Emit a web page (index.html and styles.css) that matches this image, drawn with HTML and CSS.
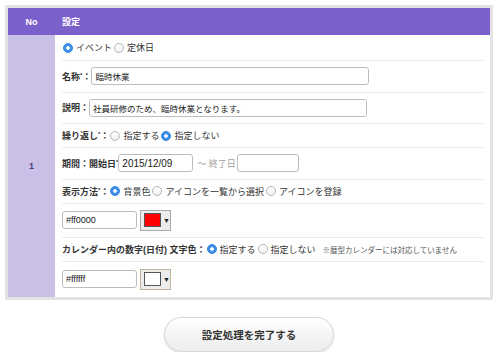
FILE: index.html
```html
<!DOCTYPE html>
<html lang="ja">
<head>
    <meta charset="UTF-8">
    <title>設定</title>
    <link rel="stylesheet" href="styles.css">
</head>
<body>
    <div class="frame">
        <table class="settings">
            <tr>
                <th class="col-no">No</th>
                <th class="col-set">設定</th>
            </tr>
            <tr>
                <td class="num">1</td>
                <td class="cell">
                    <div class="row row-first">
                        <label><input type="radio" name="kind" checked>イベント</label>
                        <label><input type="radio" name="kind">定休日</label>
                    </div>
                    <div class="row row-input">
                        <span class="lbl">名称<sup>*</sup>：</span>
                        <input type="text" class="txt wide" value="臨時休業">
                    </div>
                    <div class="row row-input">
                        <span class="lbl">説明：</span>
                        <input type="text" class="txt wide" value="社員研修のため、臨時休業となります。">
                    </div>
                    <div class="row">
                        <span class="lbl">繰り返し<sup>*</sup>：</span>
                        <label><input type="radio" name="rep">指定する</label>
                        <label><input type="radio" name="rep" checked>指定しない</label>
                    </div>
                    <div class="row row-input">
                        <span class="lbl">期間：開始日<sup>*</sup></span>
                        <input type="text" class="txt date" value="2015/12/09">
                        <span class="muted">〜 終了日</span>
                        <input type="text" class="txt date-end" value="">
                    </div>
                    <div class="row">
                        <span class="lbl">表示方法<sup>*</sup>：</span>
                        <label><input type="radio" name="disp" checked>背景色</label>
                        <label><input type="radio" name="disp">アイコンを一覧から選択</label>
                        <label><input type="radio" name="disp">アイコンを登録</label>
                    </div>
                    <div class="row row-color">
                        <input type="text" class="txt hex" value="#ff0000">
                        <div class="picker">
                            <span class="swatch red"></span>
                            <span class="arrow">▼</span>
                        </div>
                    </div>
                    <div class="row">
                        <span class="lbl">カレンダー内の数字(日付) 文字色：</span>
                        <label><input type="radio" name="fg" checked>指定する</label>
                        <label><input type="radio" name="fg">指定しない</label>
                        <span class="note">※暦型カレンダーには対応していません</span>
                    </div>
                    <div class="row row-color last">
                        <input type="text" class="txt hex" value="#ffffff">
                        <div class="picker tan">
                            <span class="swatch"></span>
                            <span class="arrow">▼</span>
                        </div>
                    </div>
                </td>
            </tr>
        </table>
    </div>

    <div class="actions">
        <button class="submit">設定処理を完了する</button>
    </div>
</body>
</html>
```

FILE: styles.css
```css
body {
    margin: 5px 7px 0 5px;
    font-family: "Liberation Sans", "Noto Sans CJK JP", sans-serif;
    font-size: 9px;
    color: #333;
    background: #fff;
}
.frame {
    border: 3px solid #e3e3e3;
}
.settings {
    width: 100%;
    border-collapse: collapse;
}
.settings th {
    background: #7b5fcb;
    color: #fff;
    font-weight: bold;
    height: 27px;
    padding: 0;
}
.col-no {
    width: 47px;
    text-align: center;
}
.col-set {
    text-align: left;
    padding-left: 7px !important;
}
.num {
    background: #c9bfe7;
    color: #4a3d80;
    font-weight: bold;
    text-align: center;
    vertical-align: middle;
    padding: 0;
}
.cell {
    padding: 0 6px 0 7px;
}
.row {
    display: flex;
    align-items: center;
    box-sizing: border-box;
    height: 24px;
    border-bottom: 1px solid #ececec;
    white-space: nowrap;
}
.row-first {
    height: 26px;
}
.row-input {
    height: 31.5px;
}
.row-color {
    height: 34px;
}
.row.last {
    height: 35px;
    border-bottom: none;
}
.lbl {
    font-weight: bold;
    color: #333;
}
.lbl sup {
    font-size: 6px;
    vertical-align: 3px;
    line-height: 0;
}
label {
    display: inline-flex;
    align-items: center;
    margin-right: 1px;
}
input[type="radio"] {
    appearance: none;
    -webkit-appearance: none;
    width: 10px;
    height: 10px;
    margin: 0 3px 0 1px;
    border: 1px solid #b5b5b5;
    border-radius: 50%;
    background: linear-gradient(#fff, #f1f1f1);
    box-sizing: border-box;
}
input[type="radio"]:checked {
    border-color: #3a86e0;
    background: radial-gradient(circle, #fff 0 1.5px, #3d8fea 2px);
}
.txt {
    box-sizing: border-box;
    height: 18px;
    border: 1px solid #bdbdbd;
    border-radius: 3px;
    padding: 0 3px;
    font-family: "Liberation Sans", "Noto Sans CJK JP", sans-serif;
    font-size: 8.5px;
    color: #222;
    background: #fff;
}
.wide {
    width: 278px;
}
.date {
    width: 75px;
    font-size: 10px;
}
.date-end {
    width: 62px;
}
.muted {
    color: #a0a0a0;
    margin: 0 1px 0 4px;
}
.hex {
    width: 75px;
    font-size: 9px;
}
.picker {
    display: flex;
    align-items: center;
    box-sizing: border-box;
    width: 31px;
    height: 21px;
    margin-left: 3px;
    padding-left: 3px;
    border: 1px solid #a9a9a9;
    background: #ececec;
}
.picker.tan {
    border-color: #c4b29d;
}
.swatch {
    box-sizing: border-box;
    width: 18px;
    height: 14px;
    border: 1px solid #555;
    background: #fff;
}
.swatch.red {
    background: #ff0000;
}
.arrow {
    font-size: 7px;
    margin-left: 2px;
    color: #222;
}
.note {
    font-size: 7.5px;
    color: #555;
    margin-left: 6px;
}
.actions {
    text-align: center;
    padding-top: 17px;
}
.submit {
    width: 170px;
    height: 35px;
    border: 1px solid #d6d6d6;
    border-radius: 18px;
    background: linear-gradient(#ffffff, #ececec);
    box-shadow: 0 1px 2px rgba(0, 0, 0, 0.15);
    font-family: "Liberation Sans", "Noto Sans CJK JP", sans-serif;
    font-size: 10.5px;
    font-weight: bold;
    color: #333;
}
```
